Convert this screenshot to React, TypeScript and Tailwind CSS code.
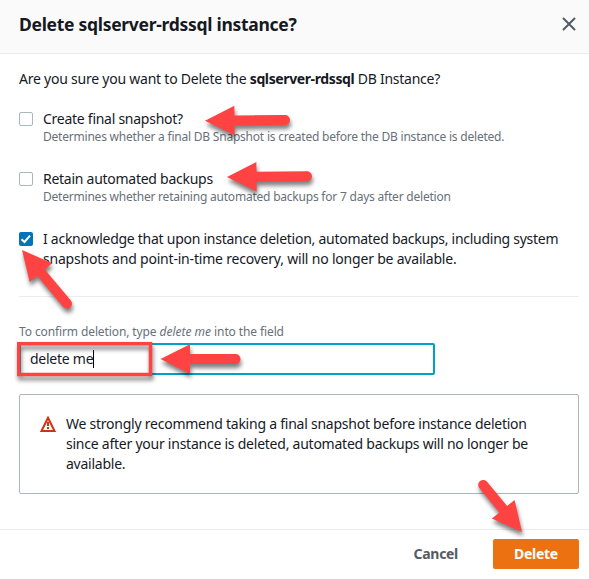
import type { ReactNode } from "react";

function Checkbox({ checked = false }: { checked?: boolean }) {
  return (
    <span
      role="checkbox"
      aria-checked={checked}
      className={
        checked
          ? "mt-[3px] size-[14px] shrink-0 rounded-[2px] bg-[#0073bb]"
          : "mt-[3px] size-[14px] shrink-0 rounded-[2px] border border-[#aab7b8] bg-white"
      }
    >
      {checked && (
        <svg viewBox="0 0 14 14" className="block size-[14px]" fill="none" stroke="#fff" strokeWidth="2">
          <path d="M2.500 7.300 5.500 10 11 3.600" />
        </svg>
      )}
    </span>
  );
}

function Option({ label, hint, checked }: { label: ReactNode; hint?: ReactNode; checked?: boolean }) {
  return (
    <label className="flex gap-[10px]">
      <Checkbox checked={checked} />
      <span className="flex flex-col">
        <span className="leading-5 tracking-[-0.265px]">{label}</span>
        {hint && <span className="h-5 text-[12px] leading-4 tracking-[-0.215px] text-[#687078]">{hint}</span>}
      </span>
    </label>
  );
}

/* Callout arrow; its tip sits at the origin and it extends to the right. */
function Arrow({ x, y, angle, length }: { x: number; y: number; angle: number; length: number }) {
  return (
    <g transform={`translate(${x} ${y}) rotate(${angle})`}>
      <path d={`M0 0 29.500-14.700V-5H${length - 5}a5 5 0 0 1 0 10H29.500V14.700Z`} fill="#ff4343" />
    </g>
  );
}

export default function App() {
  return (
    <div className="relative flex h-[579px] w-[589px] flex-col overflow-hidden whitespace-nowrap bg-white font-['Noto_Sans',sans-serif] text-[14px] leading-5 text-[#16191f]">
      <header className="flex h-[54px] shrink-0 items-start justify-between border-b border-[#eaeded] bg-[#fafafa] pr-3 pl-[19px]">
        <h1 className="mt-[13px] text-[17.5px] leading-[22px] font-bold tracking-[-0.29px]">
          Delete sqlserver-rdssql instance?
        </h1>
        <button aria-label="Close" className="mt-4">
          <svg viewBox="0 0 16 16" className="size-4" stroke="#545b64" strokeWidth="2" strokeLinecap="round">
            <path d="m2.500 2.500 11 11m0-11-11 11" />
          </svg>
        </button>
      </header>

      <main className="flex h-[475px] shrink-0 flex-col px-[19px] pr-[10px] pt-[15px]">
        <p>
          <span className="tracking-[-0.23px]">Are you sure you want to Delete the </span>
          <b className="tracking-[-0.38px]">sqlserver-rdssql</b>
          <span className="tracking-[-0.25px]"> DB Instance?</span>
        </p>
        <div className="mt-5 flex flex-col gap-5">
          <Option label="Create final snapshot?" hint="Determines whether a final DB Snapshot is created before the DB instance is deleted." />
          <Option label="Retain automated backups" hint="Determines whether retaining automated backups for 7 days after deletion" />
          <Option
            checked
            label={
              <>
                <span className="block">I acknowledge that upon instance deletion, automated backups, including system</span>
                <span className="block tracking-[-0.2px]">snapshots and point-in-time recovery, will no longer be available.</span>
              </>
            }
          />
        </div>
        <hr className="mt-[27px] border-[#eaeded]" />
        <p className="mt-[25px] h-[21px] text-[12px] tracking-[-0.11px] text-[#687078]">
          To confirm deletion, type <i className="tracking-normal">delete me</i> into the field
        </p>
        <div className="flex h-8 w-[416px] shrink-0 items-center rounded-[2px] border-2 border-[#00a1c9] pl-[9px]">
          <span className="tracking-[-0.25px]">delete me</span>
          <span className="h-[18px] w-px bg-black" />
        </div>
        <div className="mt-[19px] flex h-[100px] shrink-0 gap-[10px] rounded-[2px] border border-[#aab7b8] pt-[19px] pl-5">
          <svg viewBox="0 0 16 16" className="mt-[2px] size-4 shrink-0" fill="none" stroke="#d13212" strokeWidth="2">
            <path d="M8 1.800 14.500 15H1.500Z" />
            <path d="M8 6v4M8 11v2" />
          </svg>
          <p className="tracking-[-0.24px]">
            <span className="block">We strongly recommend taking a final snapshot before instance deletion</span>
            <span className="block">since after your instance is deleted, automated backups will no longer be</span>
            <span className="block">available.</span>
          </p>
        </div>
      </main>

      <footer className="flex h-[50px] shrink-0 items-start justify-end border-t border-[#eaeded] pt-[9px] pr-[10px] font-bold tracking-[-0.3px]">
        <button className="mr-[35px] h-[30px] text-[#545b64]">Cancel</button>
        <button className="h-[30px] w-[86px] rounded-[2px] bg-[#ec7211] text-white">Delete</button>
      </footer>

      <svg viewBox="0 0 589 579" className="pointer-events-none absolute inset-0 size-full drop-shadow-[1px_4px_2px_rgba(0,0,0,0.5)]">
        <Arrow x={205} y={120.7} angle={-0.5} length={85} />
        <Arrow x={227} y={177} angle={-0.5} length={85} />
        <Arrow x={22} y={250} angle={50} length={75} />
        <Arrow x={160.5} y={359} angle={0} length={80} />
        <Arrow x={522} y={532} angle={-129.5} length={66} />
        <rect x="18.750" y="343.700" width="131.750" height="30.800" fill="none" stroke="#ff4343" strokeWidth="3.500" />
      </svg>
    </div>
  );
}
